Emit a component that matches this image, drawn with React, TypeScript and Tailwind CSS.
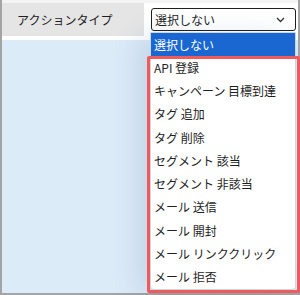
import React from "react";

const items = [
  "API 登録",
  "キャンペーン 目標到達",
  "タグ 追加",
  "タグ 削除",
  "セグメント 該当",
  "セグメント 非該当",
  "メール 送信",
  "メール 開封",
  "メール リンククリック",
  "メール 拒否",
];

export default function App() {
  return (
    <div
      className="relative w-[300px] h-[295px] flex flex-col bg-[#f4f4f4] pt-[3px] border-l-2 border-r-2 border-b-2 border-[#a4a4a4] text-[12px] text-[#1e1e1e]"
      style={{ fontFamily: '"Noto Sans CJK JP", "Noto Sans", sans-serif' }}
    >
      <div className="flex h-[33px] shrink-0">
        <div className="w-[142px] bg-[#e5e5e5] flex items-center pl-[15px]">アクションタイプ</div>
        <div className="flex-1 bg-white flex items-center pl-[7px]">
          <div className="w-[145px] h-[23px] border border-[#1f1f1f] rounded-[3px] flex items-center justify-between pl-[3px] pr-[10px] bg-white">
            <span>選択しない</span>
            <svg width="9" height="6" viewBox="0 0 9 6" fill="none">
              <polyline points="1,1 4.5,4.5 8,1" stroke="#333" strokeWidth="1.3" />
            </svg>
          </div>
        </div>
      </div>
      <div className="h-[4px] shrink-0 bg-white" />
      <div className="flex-1 bg-[#dcebf8]" />

      <div className="absolute left-[148px] top-[32px] w-[146px] h-[258px] bg-white border border-[#c9d6e3] rounded-b-[4px] shadow-[-12px_4px_28px_rgba(40,80,130,0.14)] flex flex-col">
        <div className="h-[23px] shrink-0 bg-[#1a67d2] text-white flex items-center pl-[3px]">選択しない</div>
        {items.map((t) => (
          <div key={t} className="h-[23.3px] shrink-0 flex items-center pl-[3px]">
            {t}
          </div>
        ))}
      </div>

      <div className="absolute left-[145px] top-[56px] w-[153px] h-[237px] border-[3px] border-[#f15a5c] rounded-[2px]" />
    </div>
  );
}
